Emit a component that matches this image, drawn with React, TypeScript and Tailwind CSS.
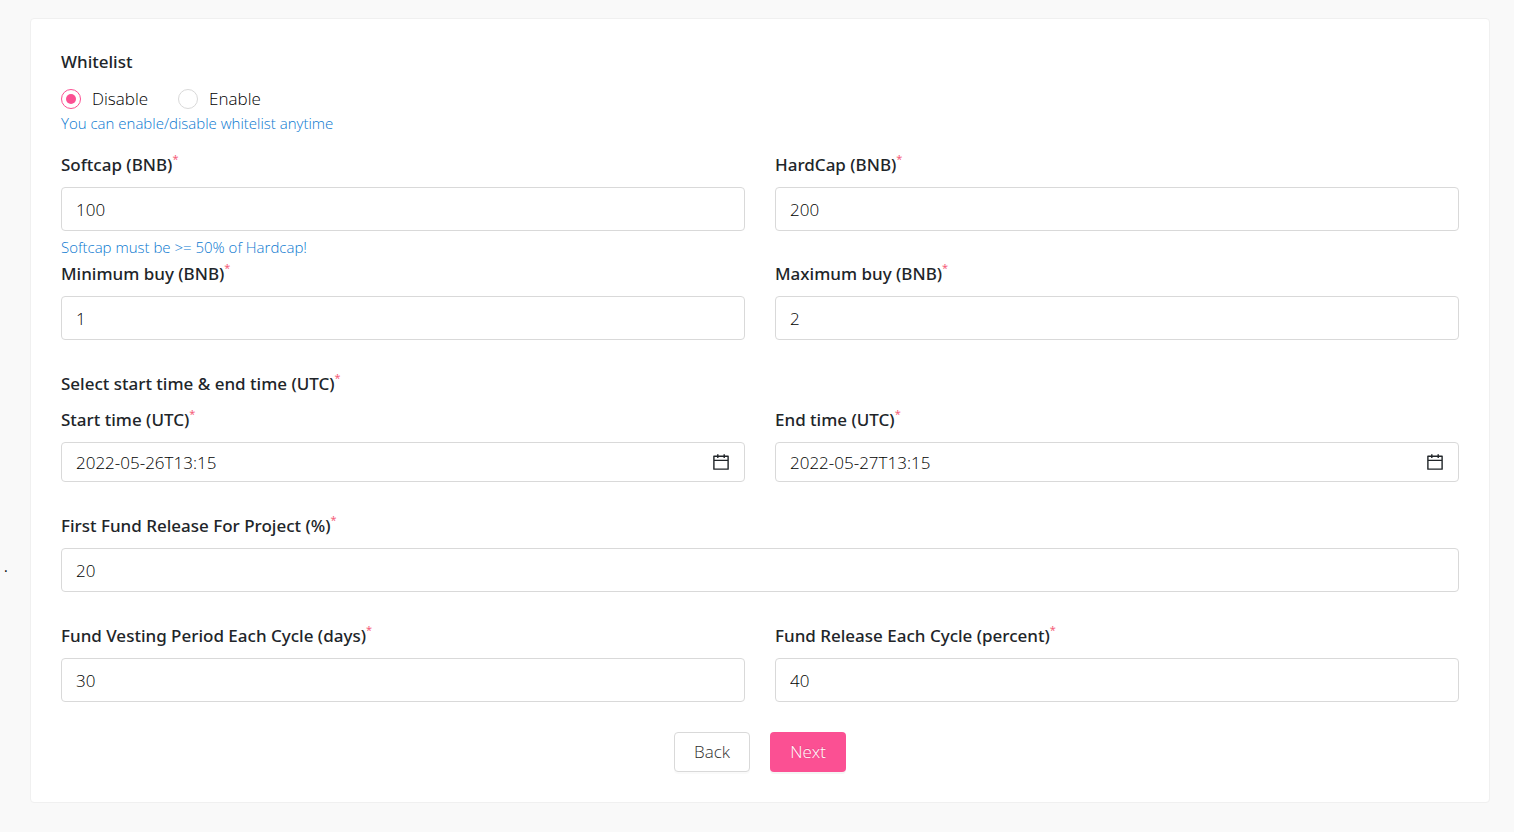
import { useId, useState } from "react";
import type { ReactNode } from "react";
import { AiOutlineCalendar } from "react-icons/ai";

function Required() {
  return <span className="relative -top-2 text-[11px] leading-none font-normal text-[#f5607a]">*</span>;
}

function Hint({ children }: { children: ReactNode }) {
  return <p className="text-[15px] leading-5 font-light text-[#0a78d0]">{children}</p>;
}

const labelClass = "block font-['Noto_Sans','Open_Sans',sans-serif] text-[17px] leading-6 font-medium";
const boxClass =
  "w-full rounded border border-[#d9d9d9] bg-white px-3.5 text-[17px] font-light text-black outline-none focus:border-[#fb5093]";

function Field({ label, initial }: { label: string; initial: string }) {
  const id = useId();
  const [value, setValue] = useState(initial);
  return (
    <div className="flex flex-col gap-2.5">
      <label htmlFor={id} className={labelClass}>
        {label}
        <Required />
      </label>
      <input
        id={id}
        type="text"
        inputMode="decimal"
        value={value}
        onChange={(e) => setValue(e.target.value)}
        className={`${boxClass} h-11`}
      />
    </div>
  );
}

function DateField({ label, initial }: { label: string; initial: string }) {
  const id = useId();
  const [value, setValue] = useState(initial);
  return (
    <div className="flex flex-col gap-2.5">
      <label htmlFor={id} className={labelClass}>
        {label}
        <Required />
      </label>
      <div className="relative">
        <input
          id={id}
          type="text"
          value={value}
          onChange={(e) => setValue(e.target.value)}
          className={`${boxClass} h-10`}
        />
        <AiOutlineCalendar
          size={20}
          aria-hidden="true"
          className="pointer-events-none absolute top-2.5 right-3.5 text-[#212529]"
        />
      </div>
    </div>
  );
}

function Choice({ label, checked, onSelect }: { label: string; checked: boolean; onSelect: () => void }) {
  return (
    <label className="flex cursor-pointer items-center gap-[11px] text-[17px] leading-6 font-light text-black">
      <input
        type="radio"
        name="whitelist"
        checked={checked}
        onChange={onSelect}
        className="grid size-5 appearance-none place-items-center rounded-full border border-[#d9d9d9] bg-white before:size-2.5 before:rounded-full checked:border-[#fb5093] checked:before:bg-[#fb5093]"
      />
      {label}
    </label>
  );
}

export default function App() {
  const [whitelist, setWhitelist] = useState(false);
  return (
    <main className="relative min-h-screen bg-[#f9f9f9] pt-[18px] pr-6 pb-[29px] pl-[30px] font-['Open_Sans','Noto_Sans',sans-serif] text-[#212529]">
      <span className="absolute top-[557px] left-1 text-sm leading-5 text-black">.</span>
      <form
        onSubmit={(e) => e.preventDefault()}
        className="rounded border border-[#f0f0f0] bg-white px-[30px] pt-[31px] pb-[30px]"
      >
        <fieldset>
          <legend className={labelClass}>Whitelist</legend>
          <div className="mt-[13px] mb-0.5 flex gap-[30px]">
            <Choice label="Disable" checked={!whitelist} onSelect={() => setWhitelist(false)} />
            <Choice label="Enable" checked={whitelist} onSelect={() => setWhitelist(true)} />
          </div>
          <Hint>You can enable/disable whitelist anytime</Hint>
        </fieldset>

        <div className="mt-5 grid grid-cols-2 gap-x-[30px]">
          <Field label="Softcap (BNB)" initial="100" />
          <Field label="HardCap (BNB)" initial="200" />
        </div>
        <div className="mt-[6px] mb-[5px]">
          <Hint>Softcap must be &gt;= 50% of Hardcap!</Hint>
        </div>
        <div className="grid grid-cols-2 gap-x-[30px]">
          <Field label="Minimum buy (BNB)" initial="1" />
          <Field label="Maximum buy (BNB)" initial="2" />
        </div>

        <fieldset className="mt-8">
          <legend className={labelClass}>
            Select start time &amp; end time (UTC)
            <Required />
          </legend>
          <div className="mt-3 grid grid-cols-2 gap-x-[30px]">
            <DateField label="Start time (UTC)" initial="2022-05-26T13:15" />
            <DateField label="End time (UTC)" initial="2022-05-27T13:15" />
          </div>
        </fieldset>

        <div className="mt-8">
          <Field label="First Fund Release For Project (%)" initial="20" />
        </div>
        <div className="mt-8 grid grid-cols-2 gap-x-[30px]">
          <Field label="Fund Vesting Period Each Cycle (days)" initial="30" />
          <Field label="Fund Release Each Cycle (percent)" initial="40" />
        </div>

        <div className="mt-[30px] flex justify-center gap-5">
          <button
            type="button"
            className="h-10 w-19 rounded border border-[#d9d9d9] bg-white text-[17px] font-light text-[#303030] shadow-[0_2px_0_rgba(0,0,0,0.02)]"
          >
            Back
          </button>
          <button
            type="submit"
            className="h-10 w-19 rounded bg-[#fb5093] text-[17px] font-light text-white shadow-[0_2px_0_rgba(0,0,0,0.04)] [text-shadow:0_-1px_0_rgba(0,0,0,0.12)]"
          >
            Next
          </button>
        </div>
      </form>
    </main>
  );
}
